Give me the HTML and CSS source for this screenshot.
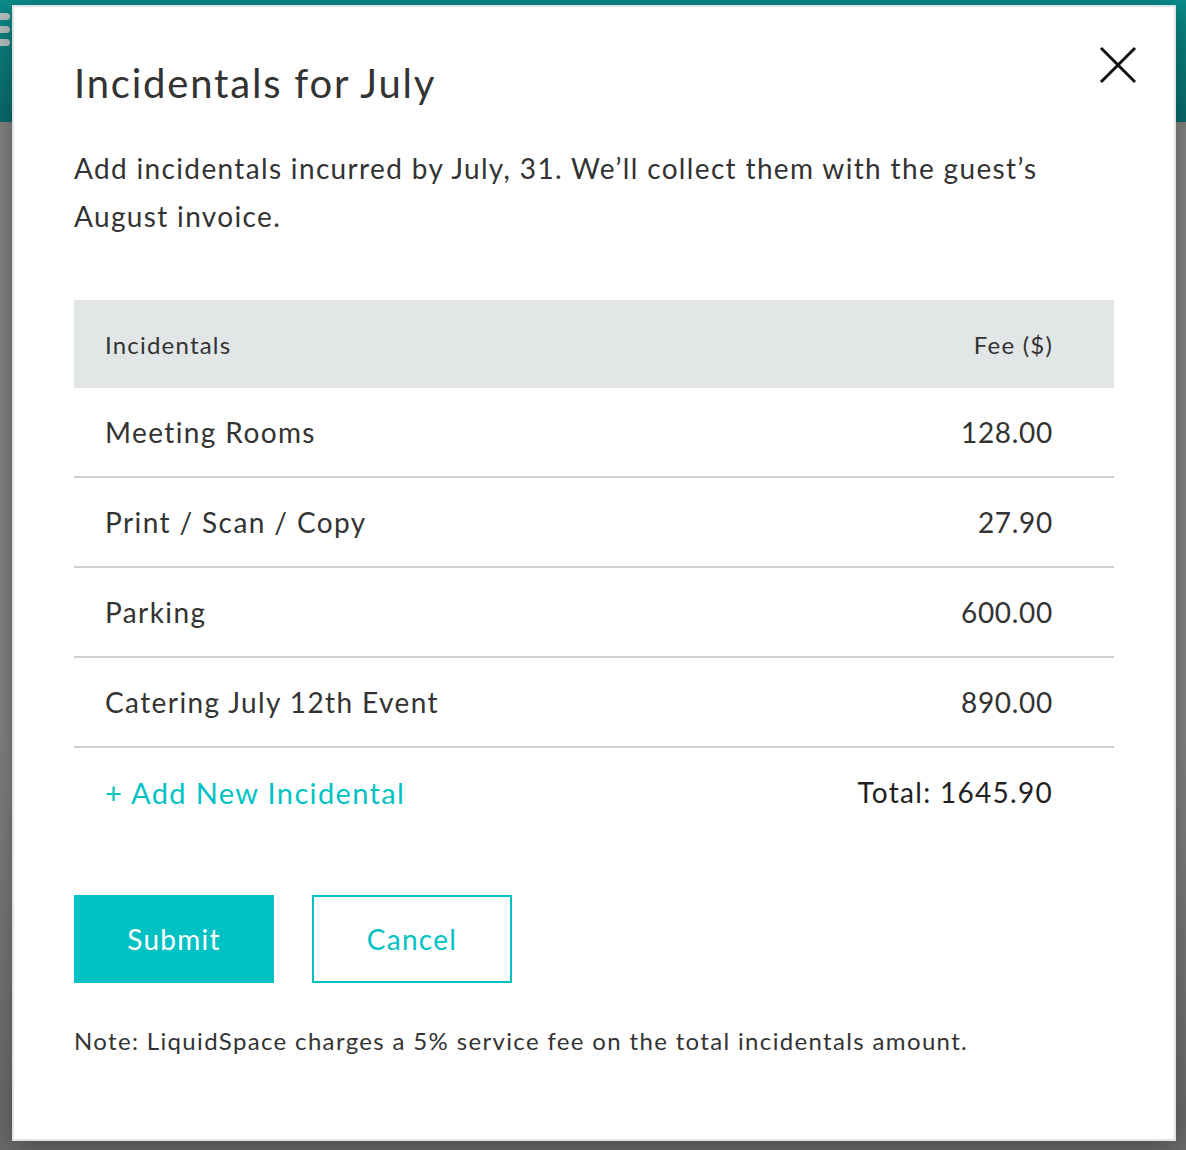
FILE: index.html
```html
<!DOCTYPE html>
<html lang="en">
<head>
  <meta charset="UTF-8" />
  <meta name="viewport" content="width=device-width, initial-scale=1" />
  <title>Incidentals for July</title>
  <link rel="stylesheet" href="styles.css">
</head>
<body>
  <div class="page">
    <div class="topbar">
      <div class="menu">
        <span></span><span></span><span></span>
      </div>
    </div>
    <div class="page-body"></div>
  </div>

  <div class="modal">
    <button class="close" aria-label="Close">
      <svg width="40" height="40" viewBox="0 0 40 40">
        <path d="M3 3 L37 37 M37 3 L3 37" stroke="#111" stroke-width="3" fill="none" />
      </svg>
    </button>

    <h1>Incidentals for July</h1>
    <p class="intro">Add incidentals incurred by July, 31. We’ll collect them with the guest’s August invoice.</p>

    <table class="fees">
      <thead>
        <tr>
          <th>Incidentals</th>
          <th class="num">Fee ($)</th>
        </tr>
      </thead>
      <tbody>
        <tr><td>Meeting Rooms</td><td class="num">128.00</td></tr>
        <tr><td>Print / Scan / Copy</td><td class="num">27.90</td></tr>
        <tr><td>Parking</td><td class="num">600.00</td></tr>
        <tr><td>Catering July 12th Event</td><td class="num">890.00</td></tr>
      </tbody>
      <tfoot>
        <tr>
          <td><a href="#" class="add">+ Add New Incidental</a></td>
          <td class="num total">Total: 1645.90</td>
        </tr>
      </tfoot>
    </table>

    <div class="actions">
      <button class="btn primary">Submit</button>
      <button class="btn outline">Cancel</button>
    </div>

    <p class="note">Note: LiquidSpace charges a 5% service fee on the total incidentals amount.</p>
  </div>
</body>
</html>
```

FILE: styles.css
```css
html, body {
  margin: 0;
  height: 100%;
}
body {
  font-family: Lato, "Open Sans", sans-serif;
  color: #333;
  background: #828282;
  overflow: hidden;
}
.page {
  height: 100%;
  display: flex;
  flex-direction: column;
}
.topbar {
  height: 122px;
  background: linear-gradient(#0a8f8d, #0a6c6c);
  display: flex;
  align-items: center;
}
.menu {
  margin-top: -64px;
  margin-left: -10px;
  display: flex;
  flex-direction: column;
  gap: 6px;
}
.menu span {
  display: block;
  width: 20px;
  height: 7px;
  border-radius: 4px;
  background: #b9c4c4;
}
.page-body {
  flex: 1;
  background: linear-gradient(#858585 60%, #6a6a6a);
}

.modal {
  position: absolute;
  top: 5px;
  left: 12px;
  width: 1164px;
  height: 1136px;
  box-sizing: border-box;
  background: #fff;
  border: 2px solid #dfe4e4;
  padding: 52px 60px 0;
  box-shadow: 0 4px 30px rgba(0,0,0,0.35);
}
.close {
  position: absolute;
  top: 38px;
  right: 36px;
  padding: 0;
  border: 0;
  background: none;
  cursor: pointer;
}
.close svg {
  display: block;
}
h1 {
  margin: 0;
  font-size: 40px;
  line-height: 48px;
  font-weight: 400;
  letter-spacing: 0.045em;
  color: #333;
}
.intro {
  margin: 37px 0 0;
  font-size: 28px;
  line-height: 48px;
  letter-spacing: 0.048em;
  max-width: 990px;
}

.fees {
  margin-top: 60px;
  width: 1040px;
  border-collapse: collapse;
}
.fees th {
  height: 88px;
  background: #e2e6e7;
  font-size: 24px;
  font-weight: 400;
  letter-spacing: 0.05em;
  text-align: left;
  padding: 0 31px;
}
.fees td {
  height: 88px;
  font-size: 28px;
  letter-spacing: 0.05em;
  padding: 0 31px;
  border-bottom: 2px solid #cfcfcf;
}
.fees td.num {
  text-align: right;
  padding-right: 61px;
  letter-spacing: 0.025em;
}
.fees th.num {
  text-align: right;
  padding-right: 61px;
}
.fees tfoot td {
  border-bottom: 0;
}
.fees td.total {
  color: #222;
  letter-spacing: 0.046em;
}
.add {
  color: #00c2c4;
  text-decoration: none;
  font-size: 29px;
  letter-spacing: 0.047em;
}

.actions {
  margin-top: 59px;
  display: flex;
  gap: 38px;
}
.btn {
  width: 200px;
  height: 88px;
  font-family: inherit;
  letter-spacing: 0.045em;
  font-size: 28px;
  border: 2px solid #00c2c4;
  cursor: pointer;
}
.primary {
  background: #00c2c4;
  color: #fff;
}
.outline {
  background: #fff;
  color: #00c2c4;
}
.note {
  margin: 41px 0 0;
  font-size: 24px;
  line-height: 34px;
  letter-spacing: 0.056em;
}
```
